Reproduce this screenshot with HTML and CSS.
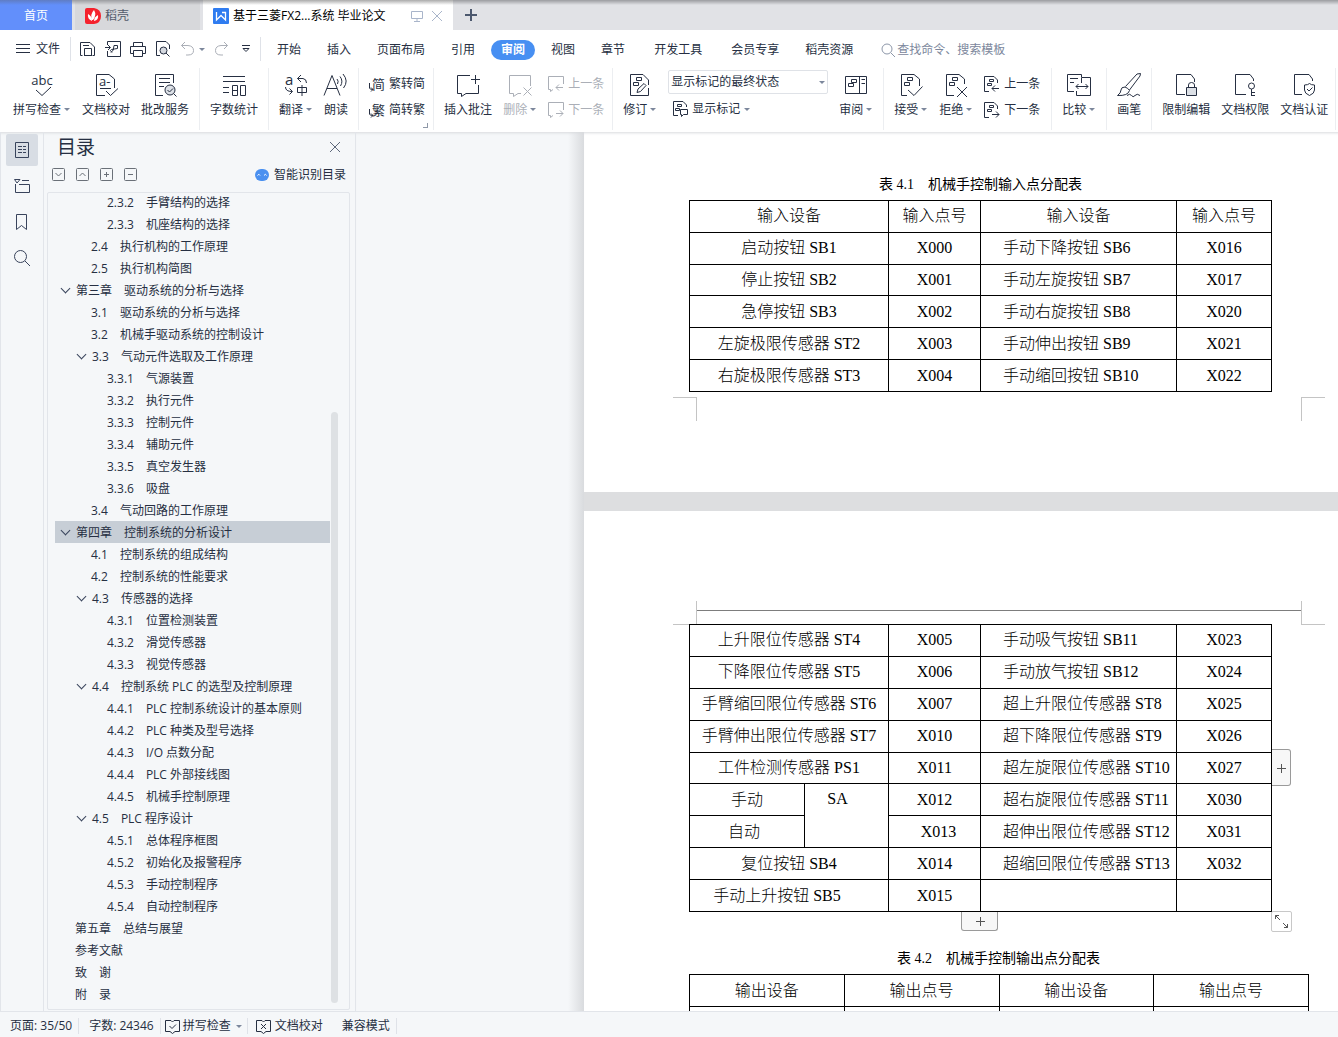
FILE: index.html
```html
<!DOCTYPE html>
<html lang="zh-CN">
<head>
<meta charset="UTF-8">
<meta name="viewport" content="width=device-width, initial-scale=1.0">
<title>基于三菱FX2...系统 毕业论文</title>
<link rel="stylesheet" href="styles.css">
</head>
<body>

<!-- 标签栏 -->
<header class="tabs">
    <button class="tab home">首页</button>
    <button class="tab docer">
        <svg width="16" height="16" viewBox="0 0 16 16"><path d="M2 0H9Q16 1 16 8T9 16H2Q0 16 0 14V2Q0 0 2 0Z" fill="#f5222d"/><path d="M7 13Q2 11 3 6Q7 8 7 13ZM7 12Q5 6 9 2Q12 7 8 12ZM9 13Q9 9 13 7Q14 12 9 13Z" fill="#fff"/></svg>
        <span>稻壳</span>
    </button>
    <button class="tab current">
        <svg width="16" height="16" viewBox="0 0 16 16"><rect width="16" height="16" rx="1" fill="#2f7cf0"/><path d="M3.500 4V12L8 7.500L12.500 12V4.500H9" fill="none" stroke="#fff" stroke-width="1.300"/></svg>
        <span class="tab-name">基于三菱FX2...系统 毕业论文</span>
        <svg class="pale" width="12" height="12" viewBox="0 0 12 12"><path d="M.5 1.500H11.500V8.500H.5ZM6 8.500V11M3 11.500H9"/></svg>
        <svg class="pale" width="12" height="12" viewBox="0 0 12 12"><path d="M1 1L11 11M11 1L1 11"/></svg>
    </button>
    <button class="tab-add" aria-label="新建">
        <svg width="12" height="12" viewBox="0 0 12 12"><path d="M6 0V12M0 6H12" stroke-width="2"/></svg>
    </button>
</header>

<!-- 菜单栏 -->
<nav class="menubar">
    <button class="file">
        <svg width="14" height="14" viewBox="0 0 14 14"><path d="M0 2.500H14M0 6.500H14M0 10.500H14"/></svg>文件
    </button>
    <div class="quick">
        <button aria-label="保存"><svg width="16" height="16" viewBox="0 0 16 16"><path d="M2.500 14.500H.5V1.500H10L14.500 6V14.500H12.500M4.500 15V7.500H11.500V15M4 14.500H12M3 4.500H9"/></svg></button>
        <button aria-label="输出为PDF"><svg width="16" height="16" viewBox="0 0 16 16"><path d="M2.500 4V.5H15.500V15.500H2.500V10M0 6.500H5M3 4L5.500 6.500L3 9M6 11.500Q9 10 9 4.500H12.500V7.500Q9 8 6.500 8.500T7 11.500"/></svg></button>
        <button aria-label="打印"><svg width="16" height="16" viewBox="0 0 16 16"><path d="M3.500 5V1.500H12.500V5M3.500 12.500H.5V5.500H15.500V12.500H12.500M3.500 9.500H12.500V15.500H3.500Z"/></svg></button>
        <button aria-label="打印预览"><svg width="16" height="16" viewBox="0 0 16 16"><path d="M5 14.500H1.500V.5H11L14.500 4V8M11 12L14.500 15.500"/><circle cx="8.500" cy="9.500" r="3.500" fill="#d5d9e0"/></svg></button>
        <button class="off" aria-label="撤销"><svg width="16" height="16" viewBox="0 0 16 16"><path d="M5 1L1.500 4.500L5 8M1.500 4.500H8Q13.500 5 13.500 9.500T8 14H6"/></svg></button>
        <span class="caret"></span>
        <button class="off redo" aria-label="恢复"><svg width="16" height="16" viewBox="0 0 16 16"><path d="M10 1L13.500 4.500L10 8M13.500 4.500H7Q1.500 5 1.500 9.500T7 14H9"/></svg></button>
        <button class="more" aria-label="更多"><svg width="8" height="8" viewBox="0 0 8 8"><path d="M0 .5H8M1 3.500H7L4 6.500Z"/></svg></button>
    </div>
    <div class="menu">
        <button>开始</button>
        <button>插入</button>
        <button>页面布局</button>
        <button>引用</button>
        <button class="active">审阅</button>
        <button>视图</button>
        <button>章节</button>
        <button class="apart">开发工具</button>
        <button class="apart">会员专享</button>
        <button>稻壳资源</button>
    </div>
    <label class="search">
        <svg width="14" height="14" viewBox="0 0 14 14"><circle cx="6" cy="6" r="5"/><path d="M10 10L14 14"/></svg>
        <input type="text" placeholder="查找命令、搜索模板" aria-label="查找命令、搜索模板">
    </label>
</nav>

<!-- 功能区 -->
<section class="ribbon">
    <div class="group first">
        <button class="big"><svg viewBox="0 0 24 24"><text x="12" y="12" font-size="13" text-anchor="middle">abc</text><path d="M6 17L12 22.500L21 14"/></svg><span>拼写检查<i class="caret"></i></span></button>
        <button class="big"><svg viewBox="0 0 24 24"><path d="M11 22.500H2.500V1.500H15L20.500 6V15M12 18L16.500 22.500L24 15.500M6 15.500H17"/><text x="5" y="13" font-size="13">a-</text></svg><span>文档校对</span></button>
        <button class="big"><svg viewBox="0 0 24 24"><path d="M10 22.500H2.500V1.500H20.500V10M6 5.500H17M6 9.500H17M6 13.500H11M20 20L23.500 23.500"/><circle cx="17" cy="17" r="5" fill="#dce0e6"/><path d="M14.500 17L16.500 19L20 15.500"/></svg><span>批改服务</span></button>
    </div>
    <div class="group">
        <button class="big"><svg viewBox="0 0 24 24"><path d="M1 3.500H23M1 8.500H23M1 14.500H7M1 19.500H7M10.500 12.500H15.500V22.500H10.500ZM10.500 17.500H15.500M18.500 12.500H23.500V22.500H18.500Z"/></svg><span>字数统计</span></button>
    </div>
    <div class="group">
        <button class="big"><svg viewBox="0 0 24 24"><text x="1" y="12" font-size="15">a</text><path d="M17 2L13.500 5.500L17 9M13.500 5.500H19Q22.500 6 22.500 10M1.500 14Q1.500 18.500 8 18.500M5.500 15.500L8.500 18.500L5.500 21.500M13.500 14.500H22.500V19.500H13.500ZM18 12V23"/></svg><span>翻译<i class="caret"></i></span></button>
        <button class="big"><svg viewBox="0 0 24 24"><path d="M0 22.500L8 2.500L16 22.500M3 15.500H13M13 6Q15 8 13.500 11M16 3.500Q19.500 8 16.500 13M19 1Q25 8 19.500 15"/></svg><span>朗读</span></button>
    </div>
    <div class="group narrow">
        <div class="stack">
            <button><svg viewBox="0 0 16 16"><text x="3" y="13" font-size="13">简</text><path d="M.5 7V12Q.5 13.500 4 13.500M2 11.500L4 13.500L2 15.500"/></svg>繁转简</button>
            <button><svg viewBox="0 0 16 16"><text x="3" y="13" font-size="13">繁</text><path d="M.5 7V12Q.5 13.500 4 13.500M2 11.500L4 13.500L2 15.500"/></svg>简转繁</button>
        </div>
        <i class="launcher"></i>
    </div>
    <div class="group narrow">
        <button class="big"><svg viewBox="0 0 24 24"><path d="M14 2.500H1.500V20.500H5.500V23.500L10 20.500H22.500V12M19.500 2V11M15 6.500H24"/></svg><span>插入批注</span></button>
        <button class="big off"><svg viewBox="0 0 24 24"><path d="M22.500 13V2.500H1.500V20.500H5.500V23.500L10 20.500H13M15.500 14.500L23.500 22.500M23.500 14.500L15.500 22.500"/></svg><span>删除<i class="caret"></i></span></button>
        <div class="stack off">
            <button><svg viewBox="0 0 16 16"><path d="M15.500 8V.5H.5V13.500H2.500V15.500L5 13.500M15 11.500H8M11 8.500L8 11.500L11 14.500"/></svg>上一条</button>
            <button><svg viewBox="0 0 16 16"><path d="M15.500 8V.5H.5V13.500H2.500V15.500L5 13.500M8 11.500H15M12 8.500L15 11.500L12 14.500"/></svg>下一条</button>
        </div>
    </div>
    <div class="group">
        <button class="big"><svg viewBox="0 0 24 24"><path d="M20.500 12V7L15 1.500H2.500V22.500H20.500V15M8.500 4.500H13.500V7.500H8.500ZM5.500 9.500H10.500V12.500H5.500ZM9 19.500L10 16L16 10.500L18 12.500L12.500 18.500Z"/></svg><span>修订<i class="caret"></i></span></button>
        <div class="markup">
            <div class="select">
                <select aria-label="显示标记">
                    <option>显示标记的最终状态</option>
                </select>
                <i class="caret"></i>
            </div>
            <button class="row"><svg viewBox="0 0 16 16"><path d="M14.500 6V4L11 .5H1.500V14.500H6M5.500 3.500H9.500V5.500H5.500ZM3.500 7.500H7.500V9.500H3.500ZM8.500 8.500H15.500V13.500H11.500L9.500 15.500V13.500H8.500Z"/></svg>显示标记<i class="caret"></i></button>
        </div>
        <button class="big"><svg viewBox="0 0 24 24"><path d="M1.500 3.500H22.500V20.500H1.500ZM15.500 3.500V20.500M17.500 6.500H21M17.500 10.500H21M7.500 6.500H12.500V9.500H7.500ZM4.500 10.500H9.500V13.500H4.500Z"/></svg><span>审阅<i class="caret"></i></span></button>
    </div>
    <div class="group wide">
        <button class="big"><svg viewBox="0 0 24 24"><path d="M8 22.500H2.500V1.500H15L20.500 6V13M8.500 4.500H13.500V7.500H8.500ZM5.500 9.500H10.500V12.500H5.500ZM9 17L15 22.500L23.500 13.500"/></svg><span>接受<i class="caret"></i></span></button>
        <button class="big"><svg viewBox="0 0 24 24"><path d="M10 22.500H2.500V1.500H15L20.500 6V11M8.500 4.500H13.500V7.500H8.500ZM5.500 9.500H10.500V12.500H5.500ZM13 14L23 24M23 14L13 24"/></svg><span>拒绝<i class="caret"></i></span></button>
        <div class="stack">
            <button><svg viewBox="0 0 16 16"><path d="M13.500 7V4L10 .5H.5V15.500H5M5.500 3.500H9.500V5.500H5.500ZM3.500 7.500H7.500V9.500H3.500ZM15 12.500H8M11 9.500L8 12.500L11 15.500"/></svg>上一条</button>
            <button><svg viewBox="0 0 16 16"><path d="M13.500 7V4L10 .5H.5V15.500H5M5.500 3.500H9.500V5.500H5.500ZM3.500 7.500H7.500V9.500H3.500ZM8 12.500H15M12 9.500L15 12.500L12 15.500"/></svg>下一条</button>
        </div>
    </div>
    <div class="group">
        <button class="big"><svg viewBox="0 0 24 24"><path d="M14.500 4V1.500H.5V18.500H7M3 5.500H11M3 9.500H7M14.500 10V4.500H23.500V22.500H9.500V18M9 13.500H21M11.500 11L9 13.500L11.500 16M18.500 11L21 13.500L18.500 16"/></svg><span>比较<i class="caret"></i></span></button>
    </div>
    <div class="group">
        <button class="big"><svg viewBox="0 0 24 24"><path d="M8.500 13.500L20 1L23.500 .5L23 3L12.500 17M8 14Q11 15 12.500 17.500Q11 23 .5 22.500Q4 20 4 17T8 14ZM10 22.500Q13 20 14.500 22.500T18 22.500T23 22.500"/></svg><span>画笔</span></button>
    </div>
    <div class="group last">
        <button class="big"><svg viewBox="0 0 24 24"><path d="M11 21.500H2.500V1.500H17L20.500 6V9M14.500 14V12Q14.500 9.500 17.500 9.500T20.500 12V14"/><path d="M12.500 14.500H22.500V22.500H12.500Z" fill="#dce0e6"/></svg><span>限制编辑</span></button>
        <button class="big"><svg viewBox="0 0 24 24"><path d="M13 21.500H2.500V1.500H17L20.500 6V8M18.500 16V23M18.500 19.500H22M18.500 22.500H22"/><circle cx="18.500" cy="13" r="3"/></svg><span>文档权限</span></button>
        <button class="big"><svg viewBox="0 0 24 24"><path d="M10 21.500H2.500V1.500H17L20.500 6V8M17.500 10.500Q19 12 22.500 12V17Q22.500 20.500 17.500 22.500Q12.500 20.500 12.500 17V12Q16 12 17.500 10.500ZM15 16L17 18L20.500 14.500"/></svg><span>文档认证</span></button>
    </div>
</section>

<main class="main">
    <aside class="rail">
        <button class="on" aria-label="目录"><svg width="16" height="16" viewBox="0 0 16 16"><path d="M1.500 .5H14.500V15.500H1.500ZM4 4.500H8M9 4.500H12M4 7.500H8M9 7.500H12M4 10.500H8M9 10.500H12"/></svg></button>
        <button aria-label="章节"><svg width="16" height="16" viewBox="0 0 16 16"><path d="M.5 1.500H6L3 5ZM8 2.500H15M1.500 6V14.500H15.500V6.500H5"/></svg></button>
        <button aria-label="书签"><svg width="16" height="16" viewBox="0 0 16 16"><path d="M2.500 .5H12.500V15.500L7.500 11.500L2.500 15.500Z"/></svg></button>
        <button aria-label="查找"><svg width="16" height="16" viewBox="0 0 16 16"><circle cx="6.500" cy="6.500" r="6"/><path d="M11 11L16 16"/></svg></button>
    </aside>

    <!-- 目录面板 -->
    <section class="outline">
        <div class="outline-head">
            <h2>目录</h2>
            <button aria-label="关闭"><svg width="10" height="10" viewBox="0 0 10 10"><path d="M0 0L10 10M10 0L0 10"/></svg></button>
        </div>
        <div class="outline-tools">
            <button aria-label="展开"><svg width="13" height="13" viewBox="0 0 13 13"><rect x=".5" y=".5" width="12" height="12" rx="1"/><path d="M3.500 5L6.500 8L9.500 5"/></svg></button>
            <button aria-label="收起"><svg width="13" height="13" viewBox="0 0 13 13"><rect x=".5" y=".5" width="12" height="12" rx="1"/><path d="M3.500 8L6.500 5L9.500 8"/></svg></button>
            <button aria-label="升级"><svg width="13" height="13" viewBox="0 0 13 13"><rect x=".5" y=".5" width="12" height="12" rx="1"/><path d="M4 6.500H9M6.500 4V9"/></svg></button>
            <button aria-label="降级"><svg width="13" height="13" viewBox="0 0 13 13"><rect x=".5" y=".5" width="12" height="12" rx="1"/><path d="M4 6.500H9"/></svg></button>
            <button class="smart"><svg width="14" height="12" viewBox="0 0 14 12"><rect width="14" height="12" rx="6" fill="#4a90f0" stroke="none"/><path d="M2.500 6.500Q4 4 5 6.500M9 6.500Q10.500 4 11.500 6.500" stroke="#fff"/></svg>智能识别目录</button>
        </div>
        <div class="tree">
            <ul>
                <li class="l3"><a href="#">2.3.2　手臂结构的选择</a></li>
                <li class="l3"><a href="#">2.3.3　机座结构的选择</a></li>
                <li class="l2"><a href="#">2.4　执行机构的工作原理</a></li>
                <li class="l2"><a href="#">2.5　执行机构简图</a></li>
                <li class="l1 open"><a href="#">第三章　驱动系统的分析与选择</a></li>
                <li class="l2"><a href="#">3.1　驱动系统的分析与选择</a></li>
                <li class="l2"><a href="#">3.2　机械手驱动系统的控制设计</a></li>
                <li class="l2 open"><a href="#">3.3　气动元件选取及工作原理</a></li>
                <li class="l3"><a href="#">3.3.1　气源装置</a></li>
                <li class="l3"><a href="#">3.3.2　执行元件</a></li>
                <li class="l3"><a href="#">3.3.3　控制元件</a></li>
                <li class="l3"><a href="#">3.3.4　辅助元件</a></li>
                <li class="l3"><a href="#">3.3.5　真空发生器</a></li>
                <li class="l3"><a href="#">3.3.6　吸盘</a></li>
                <li class="l2"><a href="#">3.4　气动回路的工作原理</a></li>
                <li class="l1 open selected"><a href="#">第四章　控制系统的分析设计</a></li>
                <li class="l2"><a href="#">4.1　控制系统的组成结构</a></li>
                <li class="l2"><a href="#">4.2　控制系统的性能要求</a></li>
                <li class="l2 open"><a href="#">4.3　传感器的选择</a></li>
                <li class="l3"><a href="#">4.3.1　位置检测装置</a></li>
                <li class="l3"><a href="#">4.3.2　滑觉传感器</a></li>
                <li class="l3"><a href="#">4.3.3　视觉传感器</a></li>
                <li class="l2 open"><a href="#">4.4　控制系统 PLC 的选型及控制原理</a></li>
                <li class="l3"><a href="#">4.4.1　PLC 控制系统设计的基本原则</a></li>
                <li class="l3"><a href="#">4.4.2　PLC 种类及型号选择</a></li>
                <li class="l3"><a href="#">4.4.3　I/O 点数分配</a></li>
                <li class="l3"><a href="#">4.4.4　PLC 外部接线图</a></li>
                <li class="l3"><a href="#">4.4.5　机械手控制原理</a></li>
                <li class="l2 open"><a href="#">4.5　PLC 程序设计</a></li>
                <li class="l3"><a href="#">4.5.1　总体程序框图</a></li>
                <li class="l3"><a href="#">4.5.2　初始化及报警程序</a></li>
                <li class="l3"><a href="#">4.5.3　手动控制程序</a></li>
                <li class="l3"><a href="#">4.5.4　自动控制程序</a></li>
                <li class="l1"><a href="#">第五章　总结与展望</a></li>
                <li class="l1"><a href="#">参考文献</a></li>
                <li class="l1"><a href="#">致　谢</a></li>
                <li class="l1"><a href="#">附　录</a></li>
            </ul>
            <div class="track"><div class="thumb"></div></div>
        </div>
    </section>

    <!-- 文档 -->
    <section class="canvas">
        <article class="page page-a">
            <div class="block">
                <p class="title">表 4.1　机械手控制输入点分配表</p>
                <table class="inputs six">
                    <colgroup><col class="c1"><col class="c2"><col class="c3"><col class="c4"><col class="c5"></colgroup>
                    <tr><th colspan="2">输入设备</th><th>输入点号</th><th>输入设备</th><th>输入点号</th></tr>
                    <tr><td colspan="2">启动按钮 SB1</td><td>X000</td><td class="left">手动下降按钮 SB6</td><td>X016</td></tr>
                    <tr><td colspan="2">停止按钮 SB2</td><td>X001</td><td class="left">手动左旋按钮 SB7</td><td>X017</td></tr>
                    <tr><td colspan="2">急停按钮 SB3</td><td>X002</td><td class="left">手动右旋按钮 SB8</td><td>X020</td></tr>
                    <tr><td colspan="2">左旋极限传感器 ST2</td><td>X003</td><td class="left">手动伸出按钮 SB9</td><td>X021</td></tr>
                    <tr><td colspan="2">右旋极限传感器 ST3</td><td>X004</td><td class="left">手动缩回按钮 SB10</td><td>X022</td></tr>
                </table>
            </div>
            <i class="crop bl"></i>
            <i class="crop br"></i>
        </article>

        <article class="page page-b">
            <i class="crop tl"></i>
            <i class="crop tr"></i>
            <hr>
            <div class="block">
                <table class="inputs nine">
                    <colgroup><col class="c1"><col class="c2"><col class="c3"><col class="c4"><col class="c5"></colgroup>
                    <tr><td colspan="2">上升限位传感器 ST4</td><td>X005</td><td class="left">手动吸气按钮 SB11</td><td>X023</td></tr>
                    <tr><td colspan="2">下降限位传感器 ST5</td><td>X006</td><td class="left">手动放气按钮 SB12</td><td>X024</td></tr>
                    <tr><td colspan="2">手臂缩回限位传感器 ST6</td><td>X007</td><td class="left">超上升限位传感器 ST8</td><td>X025</td></tr>
                    <tr><td colspan="2">手臂伸出限位传感器 ST7</td><td>X010</td><td class="left">超下降限位传感器 ST9</td><td>X026</td></tr>
                    <tr><td colspan="2">工件检测传感器 PS1</td><td>X011</td><td class="left">超左旋限位传感器 ST10</td><td>X027</td></tr>
                    <tr><td>手动</td><td rowspan="2" class="sa">SA</td><td>X012</td><td class="left">超右旋限位传感器 ST11</td><td>X030</td></tr>
                    <tr><td class="auto">自动</td><td class="shift">X013</td><td class="left">超伸出限位传感器 ST12</td><td>X031</td></tr>
                    <tr><td colspan="2">复位按钮 SB4</td><td>X014</td><td class="left">超缩回限位传感器 ST13</td><td>X032</td></tr>
                    <tr><td colspan="2" class="up">手动上升按钮 SB5</td><td>X015</td><td></td><td></td></tr>
                </table>
                <button class="add-col" aria-label="插入列"><svg width="10" height="10" viewBox="0 0 10 10"><path d="M5.500 1V10M1 5.500H10"/></svg></button>
                <button class="add-row" aria-label="插入行"><svg width="10" height="10" viewBox="0 0 10 10"><path d="M5.500 1V10M1 5.500H10"/></svg></button>
                <button class="resize" aria-label="调整大小"><svg width="15" height="15" viewBox="0 0 15 15"><path d="M1.500 5V1.500H5M1.500 1.500L6 6M9 9L13.500 13.500M13.500 10V13.500H10"/></svg></button>
            </div>
            <p class="title second">表 4.2　机械手控制输出点分配表</p>
            <table class="outputs">
                <tr><th>输出设备</th><th>输出点号</th><th>输出设备</th><th>输出点号</th></tr>
                <tr><td></td><td></td><td></td><td></td></tr>
            </table>
        </article>
    </section>
</main>

<!-- 状态栏 -->
<footer class="status">
    <span class="cell">页面: 35/50</span>
    <span class="cell">字数: 24346</span>
    <button class="cell tight"><svg width="15" height="15" viewBox="0 0 15 15"><path d="M6 1.500H.5V12.500H5L7.500 14.500L10 12.500H14.500V1.500H9L7.500 3L6 1.500M4.500 7L7 9.500L11 5.500"/></svg>拼写检查<i class="caret"></i></button>
    <button class="cell plain"><svg width="15" height="15" viewBox="0 0 15 15"><path d="M6 1.500H.5V12.500H5L7.500 14.500L10 12.500H14.500V1.500H9L7.500 3L6 1.500M5 5L10 10M10 5L5 10"/></svg>文档校对</button>
    <span class="cell">兼容模式</span>
</footer>

</body>
</html>
```
FILE: styles.css
```css
* {
    box-sizing: border-box;
}

body {
    margin: 0;
    height: 100vh;
    display: flex;
    flex-direction: column;
    overflow: hidden;
    background: #f5f7f9;
    color: #262f42;
    font-family: "Open Sans", "Noto Sans CJK SC", sans-serif;
    font-size: 12px;
    line-height: 16px;
}

button {
    display: flex;
    align-items: center;
    flex-shrink: 0;
    margin: 0;
    padding: 0;
    border: 0;
    background: none;
    color: inherit;
    font: inherit;
    white-space: nowrap;
}

svg {
    display: block;
    flex-shrink: 0;
    overflow: visible;
    fill: none;
    stroke: currentColor;
}

svg text {
    fill: currentColor;
    stroke: none;
}

.caret {
    display: inline-block;
    flex-shrink: 0;
    border: 3px solid transparent;
    border-top-color: #7c879c;
    border-bottom: 0;
}

.off {
    color: #abafb7;
}

/* 标签栏 */
.tabs {
    display: flex;
    flex-shrink: 0;
    height: 30px;
    background: linear-gradient(#9b9ca0, #e1e2e6 5px);
}

.tab {
    gap: 4px;
    padding-top: 2px;
    background: linear-gradient(#9b9ca0, #d7d8db 5px);
}

.tab svg {
    stroke: none;
}

.tab .pale {
    stroke: #a9b5ca;
}

.home {
    width: 72px;
    margin-right: 3px;
    justify-content: center;
    background: linear-gradient(#5f7dc4, #628ffb 5px);
    color: #fff;
}

.docer {
    width: 125px;
    margin-right: 3px;
    padding-left: 10px;
    color: #535b6b;
}

.current {
    width: 250px;
    padding-right: 10px;
    padding-left: 10px;
    background: linear-gradient(#aaa, #fff 5px);
    color: #000;
}

.tab-name {
    flex: 1;
    text-align: left;
}

.current .pale + .pale {
    margin-left: 4px;
}

.tab-add {
    margin-left: 12px;
    color: #4c586e;
}

/* 菜单栏 */
.menubar {
    display: flex;
    flex-shrink: 0;
    align-items: center;
    height: 38px;
    background: #fff;
}

.file {
    height: 24px;
    padding: 0 10px 0 16px;
    gap: 6px;
    border-right: 1px solid #dfe2e8;
}

.quick {
    display: flex;
    align-items: center;
    gap: 9px;
    height: 24px;
    padding: 0 10px 0 9px;
    border-right: 1px solid #dfe2e8;
}

.quick .caret {
    margin: 0 0 0 -6px;
}

.quick .more {
    margin: 0 0 0 3px;
}

.menu {
    display: flex;
    gap: 6px;
    margin-left: 6px;
    padding-top: 2px;
}

.menu button {
    height: 20px;
    padding: 0 10px;
    border-radius: 10px;
}

.menu .active {
    background: #478ff2;
    color: #fff;
    font-weight: 700;
}

.menu .apart {
    margin-left: 3px;
}

.search {
    display: flex;
    align-items: center;
    flex: 1;
    gap: 2px;
    margin-left: 18px;
    padding-top: 1px;
    color: #8d97a9;
}

.search input {
    flex: 1;
    min-width: 0;
    padding: 0;
    border: 0;
    outline: 0;
    background: none;
    font: inherit;
}

.search input::placeholder {
    color: #7c879c;
    opacity: 1;
}

/* 功能区 */
.ribbon {
    display: flex;
    flex-shrink: 0;
    height: 64px;
    padding-bottom: 2px;
    background: #fff;
}

.group {
    position: relative;
    display: flex;
    flex-shrink: 0;
    gap: 11px;
    padding: 0 10px;
    border-right: 1px solid #eceef1;
}

.first {
    padding-left: 13px;
}

.narrow {
    padding-right: 8px;
}

.wide {
    padding-right: 11px;
}

.last {
    padding-right: 7px;
}

.big {
    flex-direction: column;
    justify-content: flex-start;
    gap: 5px;
    padding-top: 5px;
}

.big svg {
    width: 24px;
    height: 24px;
}

.big .caret {
    margin: 0 1px 3px 3px;
}

.stack,
.markup {
    display: flex;
    flex-direction: column;
    padding-top: 2px;
}

.stack button,
.row {
    gap: 4px;
    height: 26px;
}

.stack button {
    padding-top: 1px;
}

.stack svg,
.row svg {
    width: 16px;
    height: 16px;
}

.launcher {
    position: absolute;
    right: 5px;
    bottom: 2px;
    width: 5px;
    height: 5px;
    border: solid #8f98a8;
    border-width: 0 1px 1px 0;
}

.select {
    position: relative;
    width: 160px;
    height: 24px;
    margin-bottom: 2px;
}

.select select {
    width: 100%;
    height: 100%;
    padding: 0 2px;
    border: 1px solid #dfe2e7;
    border-radius: 2px;
    background: #fff;
    color: inherit;
    font: inherit;
    appearance: none;
}

.select .caret {
    position: absolute;
    top: 11px;
    right: 3px;
}

.row {
    padding-left: 4px;
}

/* 主区域 */
.main {
    display: flex;
    flex: 1;
    min-height: 0;
    box-shadow: inset 0 3px 3px -2px #d8dade;
}

.rail {
    display: flex;
    flex-direction: column;
    flex-shrink: 0;
    gap: 4px;
    width: 44px;
    padding: 2px 5px;
    border: solid #e2e5ea;
    border-width: 0 1px;
    color: #39445c;
}

.rail button {
    width: 32px;
    height: 32px;
    justify-content: center;
    border-radius: 2px;
}

.rail .on {
    background: #d8dde4;
}

.outline {
    display: flex;
    flex-direction: column;
    flex-shrink: 0;
    width: 312px;
    padding: 0 5px 0 3px;
    border-right: 1px solid #e2e5ea;
}

.outline-head {
    display: flex;
    align-items: center;
    justify-content: space-between;
    height: 30px;
    padding: 0 10px;
    color: #5e687b;
}

.outline-head h2 {
    margin: 0;
    color: #262f42;
    font-size: 19px;
    font-weight: 400;
}

.outline-tools {
    display: flex;
    align-items: center;
    gap: 11px;
    height: 24px;
    margin-bottom: 6px;
    padding: 0 4px 0 5px;
    color: #6a7078;
}

.smart {
    gap: 5px;
    margin-left: auto;
    padding-top: 1px;
    color: #262f42;
}

.tree {
    display: flex;
    flex: 1;
    min-height: 0;
    margin-bottom: 1px;
    padding-left: 7px;
    overflow: hidden;
    border: 1px solid #e2e5ea;
    border-radius: 2px;
}

.tree ul {
    flex: 1;
    margin: -2px 0 0;
    padding: 0;
    list-style: none;
}

.tree li {
    height: 22px;
    line-height: 24px;
    white-space: nowrap;
}

.tree a {
    color: inherit;
    text-decoration: none;
}

.l1 { padding-left: 20px; }
.l2 { padding-left: 36px; }
.l3 { padding-left: 52px; }

.open::before {
    content: "";
    display: inline-block;
    width: 6px;
    height: 6px;
    margin: 0 7px 3px -13px;
    border: solid #39445c;
    border-width: 0 1px 1px 0;
    transform: rotate(45deg);
}

.selected {
    background: #c7ced6;
}

.track {
    display: flex;
    flex-direction: column;
    justify-content: flex-end;
    width: 19px;
    padding: 0 11px 6px 1px;
}

.thumb {
    height: 73%;
    border-radius: 4px;
    background: #dee1e4;
}

/* 文档页面 */
.canvas {
    display: flex;
    flex: 1;
    flex-direction: column;
    gap: 19px;
    min-width: 0;
    padding-left: 228px;
    overflow: hidden;
    background: linear-gradient(90deg, #f5f7f9 212px, #d9dbde 228px, #dddee0 228px);
    box-shadow: inset 0 3px 3px -2px #d8dade;
}

.page {
    position: relative;
    flex-shrink: 0;
    width: 829px;
    padding: 0 112px;
    background: #fff;
    color: #000;
    font-family: "Liberation Serif", "Noto Sans CJK SC", serif;
}

.page-a {
    padding-top: 36px;
    padding-bottom: 100px;
    box-shadow: inset 0 3px 3px -2px #d8dade;
}

.page-b {
    padding-top: 99px;
}

.page hr {
    height: 1px;
    margin: 0 0 13px;
    border: 0;
    background: #7d7d7d;
}

.block {
    position: relative;
    width: 583px;
    margin-left: -7px;
}

.title {
    margin: 0;
    padding-top: 2px;
    font-size: 14px;
    line-height: 30px;
    text-align: center;
}

.second {
    margin-top: 30px;
}

table {
    border-collapse: collapse;
    table-layout: fixed;
    font-size: 16px;
    line-height: 24px;
}

th,
td {
    height: 31px;
    padding: 0;
    border: 1px solid #000;
    font-weight: 300;
    text-align: center;
    white-space: nowrap;
}

.inputs {
    width: 583px;
}

.six { height: 192px; }
.nine { height: 288px; }

.c1 { width: 115px; }
.c2 { width: 84px; }
.c3 { width: 92px; }
.c4 { width: 196px; }
.c5 { width: 95px; }

td.left {
    padding-left: 22px;
    text-align: left;
}

td.sa {
    padding: 3px 18px 0 0;
    vertical-align: top;
}

td.auto {
    padding-right: 6px;
}

td.shift {
    padding-left: 8px;
}

td.up {
    padding-right: 24px;
}

.outputs {
    width: 620px;
    margin-left: -7px;
}

.outputs th {
    height: 32px;
}

/* 版心角标 */
.crop {
    position: absolute;
    width: 24px;
    height: 24px;
    border: 0 solid #c4c4c4;
}

.bl { left: 89px; bottom: 71px; border-width: 1px 1px 0 0; }
.br { right: 88px; bottom: 71px; border-width: 1px 0 0 1px; }
.tl { left: 89px; top: 90px; border-width: 0 1px 1px 0; }
.tr { right: 88px; top: 90px; border-width: 0 0 1px 1px; }

.add-col,
.add-row,
.resize {
    position: absolute;
    justify-content: center;
    border: 1px solid #9a9a9a;
    background: #f7f7f7;
    color: #555;
}

.add-col {
    top: 125px;
    left: 583px;
    width: 19px;
    height: 37px;
    border-left: 0;
    border-radius: 0 3px 3px 0;
}

.add-row {
    top: 288px;
    left: 272px;
    width: 37px;
    height: 19px;
    border-top: 0;
    border-radius: 0 0 3px 3px;
}

.resize {
    top: 287px;
    left: 582px;
    width: 21px;
    height: 21px;
    border-color: #c8c8c8;
    border-radius: 2px;
    background: #fff;
}

/* 状态栏 */
.status {
    display: flex;
    align-items: center;
    flex-shrink: 0;
    height: 26px;
    padding-top: 3px;
    border-top: 1px solid #e2e5ea;
}

.cell {
    padding: 0 6px 0 10px;
    border-right: 1px solid #dfe2e8;
}

.tight {
    gap: 3px;
    padding-right: 5px;
    padding-left: 4px;
}

.tight .caret {
    margin-left: 2px;
}

.plain {
    gap: 4px;
    padding-right: 9px;
    padding-left: 8px;
    border-right: 0;
}
```
